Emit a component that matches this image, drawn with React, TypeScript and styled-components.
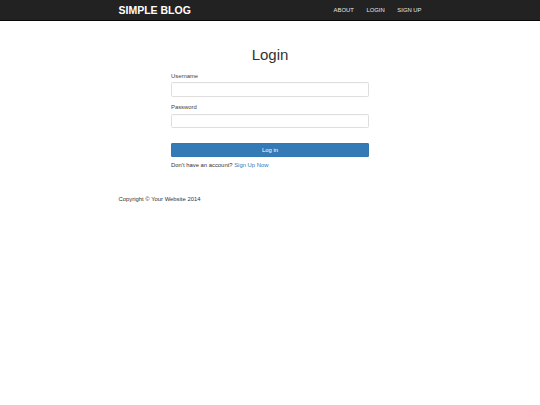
import React from "react"
import styled, { createGlobalStyle } from "styled-components"

const GlobalStyle = createGlobalStyle`
  * {
    box-sizing: border-box;
  }
  html, body {
    margin: 0;
    padding: 0;
    background: #fff;
  }
  body {
    font-family: "Liberation Sans", Arial, Helvetica, sans-serif;
    font-size: 5.88px;
    line-height: 1.42857;
    color: #333;
  }
`

const Navbar = styled.nav`
  height: 21px;
  background: #222;
  border-bottom: 0.5px solid #080808;
`

const Container = styled.div`
  width: 303px;
  margin: 0 auto;
`

const NavInner = styled(Container)`
  height: 100%;
  display: flex;
  align-items: center;
  justify-content: space-between;
`

const Brand = styled.a`
  font-size: 10.5px;
  font-weight: 700;
  color: #fff;
  text-decoration: none;
  line-height: 1;
`

const NavLinks = styled.ul`
  display: flex;
  gap: 12.6px;
  list-style: none;
  margin: 0;
  padding: 0;
`

const NavLink = styled.a`
  color: #e6e6e6;
  text-decoration: none;
  font-size: 5.88px;
  line-height: 1;
`

const FormColumn = styled.div`
  width: 198px;
  margin: 0 auto;
  padding-top: 26px;
`

const Title = styled.h1`
  margin: 0 0 8.2px;
  font-size: 15px;
  font-weight: 400;
  line-height: 1.1;
  text-align: center;
  color: #333;
`

const FormGroup = styled.div`
  margin-bottom: 6.3px;
`

const Label = styled.label`
  display: block;
  margin-bottom: 2.1px;
  font-weight: 400;
  color: #444;
`

const Input = styled.input`
  display: block;
  width: 100%;
  height: 14.6px;
  padding: 2.5px 5px;
  border: 1px solid #dedede;
  border-radius: 1.5px;
  background: #fff;
  box-shadow: inset 0 0.5px 0.5px rgba(0, 0, 0, 0.04);
  font: inherit;
  outline: none;
`

const SubmitButton = styled.button`
  display: block;
  width: 100%;
  height: 14.6px;
  margin-top: 14.6px;
  padding: 0;
  border: 0.5px solid #3277b2;
  border-radius: 1px;
  background: #337ab7;
  color: #fff;
  font: inherit;
  cursor: pointer;
`

const SignupNote = styled.p`
  margin: 4px 0 0;
`

const Link = styled.a`
  color: #337ab7;
  text-decoration: none;
`

const Footer = styled(Container)`
  margin-top: 25.6px;
`

const App: React.FC = () => {
  return (
    <>
      <GlobalStyle />
      <Navbar>
        <NavInner>
          <Brand href="#">SIMPLE BLOG</Brand>
          <NavLinks>
            <li>
              <NavLink href="#">ABOUT</NavLink>
            </li>
            <li>
              <NavLink href="#">LOGIN</NavLink>
            </li>
            <li>
              <NavLink href="#">SIGN UP</NavLink>
            </li>
          </NavLinks>
        </NavInner>
      </Navbar>

      <FormColumn>
        <Title>Login</Title>
        <form onSubmit={(e) => e.preventDefault()}>
          <FormGroup>
            <Label htmlFor="username">Username</Label>
            <Input id="username" type="text" />
          </FormGroup>
          <FormGroup>
            <Label htmlFor="password">Password</Label>
            <Input id="password" type="password" />
          </FormGroup>
          <SubmitButton type="submit">Log in</SubmitButton>
        </form>
        <SignupNote>
          Don't have an account? <Link href="#">Sign Up Now</Link>
        </SignupNote>
      </FormColumn>

      <Footer>Copyright © Your Website 2014</Footer>
    </>
  )
}

export default App
